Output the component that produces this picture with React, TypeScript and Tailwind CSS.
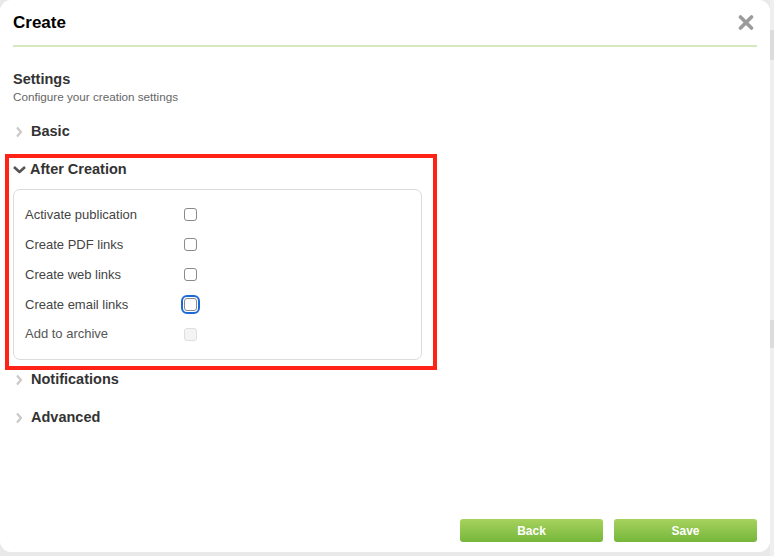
import React from "react";

function ChevronRight() {
  return (
    <svg width="15" height="12" viewBox="0 0 15 12" className="shrink-0">
      <path d="M4 1.5 L8 6 L4 10.5" fill="none" stroke="#c9c9c9" strokeWidth="2.2" strokeLinejoin="round" />
    </svg>
  );
}

function ChevronDown() {
  return (
    <svg width="15" height="12" viewBox="0 0 15 12" className="shrink-0">
      <path d="M1 3 L6.5 8 L12 3" fill="none" stroke="#555" strokeWidth="2.6" strokeLinejoin="round" />
    </svg>
  );
}

function CloseIcon() {
  return (
    <svg width="16" height="15" viewBox="0 0 16 15">
      <path d="M2.5 2 L13.5 13 M13.5 2 L2.5 13" stroke="#9b9b9b" strokeWidth="3.6" strokeLinecap="round" />
    </svg>
  );
}

const options = [
  { label: "Activate publication", focused: false, disabled: false },
  { label: "Create PDF links", focused: false, disabled: false },
  { label: "Create web links", focused: false, disabled: false },
  { label: "Create email links", focused: true, disabled: false },
  { label: "Add to archive", focused: false, disabled: true },
];

function Section({ title }: { title: string }) {
  return (
    <div className="flex items-center h-[20px] mb-[18px]">
      <ChevronRight />
      <span className="ml-[3px] text-[14.5px] font-bold text-[#333]">{title}</span>
    </div>
  );
}

export default function App() {
  return (
    <div className="w-[774px] h-[556px] flex bg-[#e9e9e9] overflow-hidden" style={{ fontFamily: '"Liberation Sans", Arial, sans-serif' }}>
      <div className="relative w-[770px] h-[552px] bg-white rounded-[11px] flex flex-col px-[13px]">
        {/* header */}
        <div className="flex items-center justify-between pt-[13px] h-[33px]">
          <h1 className="text-[17px] leading-[20px] font-bold text-black">Create</h1>
          <div className="mr-[3px] mt-[-2px]">
            <CloseIcon />
          </div>
        </div>
        <div className="mt-[12px] h-[2px] bg-[#d5e9c1]" />

        <div className="mt-[23px] text-[14.5px] leading-[18px] font-bold text-[#333]">Settings</div>
        <div className="mt-[2px] text-[11.7px] leading-[14px] text-[#666]">Configure your creation settings</div>

        <div className="mt-[18px]">
          <Section title="Basic" />

          <div className="relative">
            <div className="flex items-center h-[20px]">
              <ChevronDown />
              <span className="ml-[2px] text-[14.5px] font-bold text-[#333]">After Creation</span>
            </div>
            <div className="mt-[9px] mb-[10px] w-[409px] border border-[#dcdcdc] rounded-[7px] py-[10px]">
              {options.map((o) => (
                <div key={o.label} className="flex items-center h-[29.8px] pl-[11px]">
                  <span className={`w-[159px] text-[13px] ${o.disabled ? "text-[#555]" : "text-[#444]"}`}>{o.label}</span>
                  <input
                    type="checkbox"
                    disabled={o.disabled}
                    className={
                      o.disabled
                        ? "appearance-none w-[13px] h-[13px] rounded-[3px] border border-[#dedede] bg-[#f4f4f4]"
                        : o.focused
                        ? "appearance-none w-[13px] h-[13px] rounded-[3px] border border-[#8a8a8a] bg-white outline-2 outline-[#1b6bd6] outline-offset-[1px]"
                        : "appearance-none w-[13px] h-[13px] rounded-[3px] border border-[#8a8a8a] bg-white"
                    }
                  />
                </div>
              ))}
            </div>
            {/* annotation box */}
            <div className="absolute left-[-8px] top-[-6px] w-[432px] h-[216px] border-4 border-[#ff2216] pointer-events-none" />
          </div>

          <Section title="Notifications" />
          <Section title="Advanced" />
        </div>

        <div className="mt-auto mb-[10px] flex justify-end gap-[11px]">
          <button className="w-[143px] h-[23px] rounded-[3px] bg-gradient-to-b from-[#a6d25d] to-[#76b73b] text-white text-[12px] font-bold">Back</button>
          <button className="w-[143px] h-[23px] rounded-[3px] bg-gradient-to-b from-[#a6d25d] to-[#76b73b] text-white text-[12px] font-bold">Save</button>
        </div>
      </div>
      <div className="w-[4px] flex flex-col bg-[#efefef]">
        <div className="h-[30px]" />
        <div className="h-[30px] bg-[#dcdcdc]" />
        <div className="h-[260px]" />
        <div className="h-[28px] bg-[#dcdcdc]" />
      </div>
    </div>
  );
}
